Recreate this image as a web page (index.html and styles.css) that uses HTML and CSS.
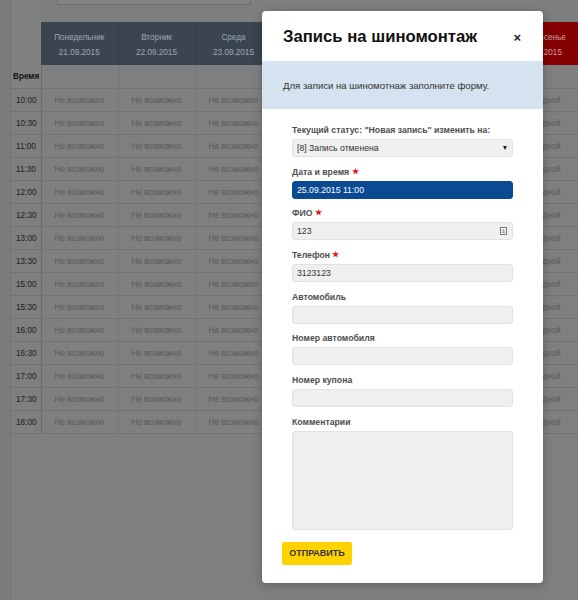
FILE: index.html
```html
<!DOCTYPE html>
<html lang="ru">
<head>
<meta charset="utf-8">
<title>Запись на шиномонтаж</title>
<link rel="stylesheet" href="styles.css">
</head>
<body>
<div class="page">
  <div class="rail"></div>
  <div class="main">
    <div class="topbar"><div class="search"></div></div>
    <table class="schedule">
      <colgroup>
        <col class="c-time"><col class="c-day"><col class="c-day"><col class="c-day"><col class="c-day"><col class="c-day"><col class="c-day"><col class="c-day">
      </colgroup>
      <thead>
        <tr class="days">
          <th class="corner"></th>
          <th>Понедельник<br>21.09.2015</th>
          <th>Вторник<br>22.09.2015</th>
          <th>Среда<br>23.09.2015</th>
          <th>Четверг<br>24.09.2015</th>
          <th>Пятница<br>25.09.2015</th>
          <th>Суббота<br>26.09.2015</th>
          <th class="sun">Воскресенье<br>27.09.2015</th>
        </tr>
        <tr class="sub">
          <th class="time-h">Время</th><th></th><th></th><th></th><th></th><th></th><th></th><th></th>
        </tr>
      </thead>
      <tbody>
        <tr><td class="time">10:00</td><td>Не возможно</td><td>Не возможно</td><td>Не возможно</td><td>Не возможно</td><td>Не возможно</td><td>Не возможно</td><td>Выходной</td></tr>
        <tr><td class="time">10:30</td><td>Не возможно</td><td>Не возможно</td><td>Не возможно</td><td>Не возможно</td><td>Не возможно</td><td>Не возможно</td><td>Выходной</td></tr>
        <tr><td class="time">11:00</td><td>Не возможно</td><td>Не возможно</td><td>Не возможно</td><td>Не возможно</td><td>Не возможно</td><td>Не возможно</td><td>Выходной</td></tr>
        <tr><td class="time">11:30</td><td>Не возможно</td><td>Не возможно</td><td>Не возможно</td><td>Не возможно</td><td>Не возможно</td><td>Не возможно</td><td>Выходной</td></tr>
        <tr><td class="time">12:00</td><td>Не возможно</td><td>Не возможно</td><td>Не возможно</td><td>Не возможно</td><td>Не возможно</td><td>Не возможно</td><td>Выходной</td></tr>
        <tr><td class="time">12:30</td><td>Не возможно</td><td>Не возможно</td><td>Не возможно</td><td>Не возможно</td><td>Не возможно</td><td>Не возможно</td><td>Выходной</td></tr>
        <tr><td class="time">13:00</td><td>Не возможно</td><td>Не возможно</td><td>Не возможно</td><td>Не возможно</td><td>Не возможно</td><td>Не возможно</td><td>Выходной</td></tr>
        <tr><td class="time">13:30</td><td>Не возможно</td><td>Не возможно</td><td>Не возможно</td><td>Не возможно</td><td>Не возможно</td><td>Не возможно</td><td>Выходной</td></tr>
        <tr><td class="time">15:00</td><td>Не возможно</td><td>Не возможно</td><td>Не возможно</td><td>Не возможно</td><td>Не возможно</td><td>Не возможно</td><td>Выходной</td></tr>
        <tr><td class="time">15:30</td><td>Не возможно</td><td>Не возможно</td><td>Не возможно</td><td>Не возможно</td><td>Не возможно</td><td>Не возможно</td><td>Выходной</td></tr>
        <tr><td class="time">16:00</td><td>Не возможно</td><td>Не возможно</td><td>Не возможно</td><td>Не возможно</td><td>Не возможно</td><td>Не возможно</td><td>Выходной</td></tr>
        <tr><td class="time">16:30</td><td>Не возможно</td><td>Не возможно</td><td>Не возможно</td><td>Не возможно</td><td>Не возможно</td><td>Не возможно</td><td>Выходной</td></tr>
        <tr><td class="time">17:00</td><td>Не возможно</td><td>Не возможно</td><td>Не возможно</td><td>Не возможно</td><td>Не возможно</td><td>Не возможно</td><td>Выходной</td></tr>
        <tr><td class="time">17:30</td><td>Не возможно</td><td>Не возможно</td><td>Не возможно</td><td>Не возможно</td><td>Не возможно</td><td>Не возможно</td><td>Выходной</td></tr>
        <tr><td class="time">18:00</td><td>Не возможно</td><td>Не возможно</td><td>Не возможно</td><td>Не возможно</td><td>Не возможно</td><td>Не возможно</td><td>Выходной</td></tr>
      </tbody>
    </table>
  </div>
</div>

<div class="modal">
  <div class="modal-head">
    <h2 class="modal-title">Запись на шиномонтаж</h2>
    <span class="close">×</span>
  </div>
  <div class="notice">Для записи на шиномотнаж заполните форму.</div>
  <div class="modal-body">
    <div class="fields">
      <div class="label">Текущий статус: "Новая запись" изменить на:</div>
      <div class="field select"><span>[8] Запись отменена</span><span class="caret"></span></div>

      <div class="label">Дата и время <span class="req">★</span></div>
      <div class="field active">25.09.2015 11:00</div>

      <div class="label">ФИО <span class="req">★</span></div>
      <div class="field with-icon"><span>123</span>
        <svg class="key" width="7" height="8" viewBox="0 0 7 8"><rect x="0.5" y="0.5" width="6" height="7" fill="#f4f4f4" stroke="#777"/><path d="M3.5 2 L5 3.8 H2 Z" fill="#888"/><rect x="2" y="4.5" width="3" height="1.5" fill="#999"/></svg>
      </div>

      <div class="label">Телефон <span class="req">★</span></div>
      <div class="field">3123123</div>

      <div class="label">Автомобиль</div>
      <div class="field"></div>

      <div class="label">Номер автомобиля</div>
      <div class="field"></div>

      <div class="label">Номер купона</div>
      <div class="field"></div>

      <div class="label">Комментарии</div>
      <div class="field textarea"></div>
    </div>
    <button class="submit" type="button">ОТПРАВИТЬ</button>
  </div>
</div>
</body>
</html>
```
FILE: styles.css
```css
html, body {
  margin: 0;
  padding: 0;
}
body {
  width: 578px;
  height: 600px;
  overflow: hidden;
  position: relative;
  background: #7f7f7f;
  font-family: "Liberation Sans", Arial, sans-serif;
  font-size: 8.2px;
}
.page {
  display: flex;
  height: 600px;
}
.rail {
  width: 11px;
  flex: none;
  background: #7c7c7c;
  border-right: 1px solid #747474;
  box-sizing: border-box;
}
.main {
  flex: 1;
  min-width: 0;
}
.topbar {
  height: 22px;
  background: linear-gradient(to right, #818181 0 30px, #7c7e80 30px);
}
.search {
  margin-left: 46px;
  width: 194px;
  height: 5px;
  box-sizing: border-box;
  background: #838383;
  border: 1px solid #6c6c6c;
  border-top: 0;
}
.schedule {
  border-collapse: collapse;
  table-layout: fixed;
  width: 569px;
}
.c-time { width: 30px; }
.c-day { width: 77px; }
.schedule th, .schedule td {
  padding: 0;
  font-weight: normal;
  font-size: 8.2px;
}
.days th {
  height: 43px;
  box-sizing: border-box;
  background: #3a4550;
  color: #9ea7b0;
  line-height: 15px;
  border-right: 1px solid #343e48;
  text-align: center;
  padding-top: 3px;
}
.days th.corner {
  background: #818181;
  border-right: 0;
}
.days th.sun {
  background: #850000;
  color: #c9a0a0;
}
.sub th {
  height: 23px;
  border-bottom: 1px solid #727272;
  border-right: 1px solid #767676;
}
.sub th.time-h {
  background: #818181;
  text-align: left;
  padding-left: 2px;
  font-weight: bold;
  color: #141414;
  border-right: 1px solid #6c6c6c;
}
.schedule td {
  height: 22px;
  border-bottom: 1px solid #727272;
  border-right: 1px solid #777777;
  text-align: center;
  color: #5a5a5a;
}
.schedule td.time {
  text-align: left;
  padding-left: 5px;
  color: #1e1e1e;
  border-right: 1px solid #6c6c6c;
}

/* modal */
.modal {
  position: absolute;
  left: 262px;
  top: 11px;
  width: 281px;
  background: #fff;
  border-radius: 4px;
  box-shadow: 0 2px 10px rgba(0, 0, 0, 0.25);
  overflow: hidden;
}
.modal-head {
  height: 50px;
  display: flex;
  align-items: center;
  justify-content: space-between;
  padding: 0 22px 0 21px;
}
.modal-title {
  margin: 0;
  font-size: 16.7px;
  font-weight: bold;
  color: #111;
  padding-top: 2px;
}
.close {
  font-size: 13px;
  font-weight: bold;
  color: #222;
  line-height: 1;
  margin-top: 3px;
}
.notice {
  height: 48px;
  background: #d5e2ef;
  display: flex;
  align-items: center;
  padding-left: 21px;
  font-size: 9.6px;
  color: #333;
}
.modal-body {
  padding: 15px 20px 18px;
}
.fields {
  margin: 0 10px;
}
.label {
  height: 13px;
  font-size: 8.7px;
  font-weight: bold;
  color: #4e4e4e;
  line-height: 13px;
  margin-bottom: 2px;
}
.req {
  color: #e0161b;
  font-size: 8px;
  line-height: 1;
  position: relative;
  top: -1px;
}
.field {
  height: 18px;
  box-sizing: border-box;
  background: #efefef;
  border: 1px solid #e2e2e2;
  border-radius: 3px;
  padding: 0 5px 0 4px;
  display: flex;
  align-items: center;
  justify-content: space-between;
  font-size: 8.7px;
  color: #333;
  margin-bottom: 8.7px;
}
.field.active {
  background: #0a4a93;
  border-color: #0a4a93;
  color: #fff;
}
.caret {
  width: 0;
  height: 0;
  border-left: 2.5px solid transparent;
  border-right: 2.5px solid transparent;
  border-top: 4px solid #222;
}
.key {
  display: block;
}
.field.textarea {
  height: 99px;
  margin-bottom: 12px;
}
.submit {
  display: block;
  width: 70px;
  height: 23px;
  padding: 0;
  border: 0;
  border-radius: 2px;
  background: #ffd200;
  color: #333;
  font-family: "Liberation Sans", Arial, sans-serif;
  font-size: 9px;
  font-weight: bold;
}
```
